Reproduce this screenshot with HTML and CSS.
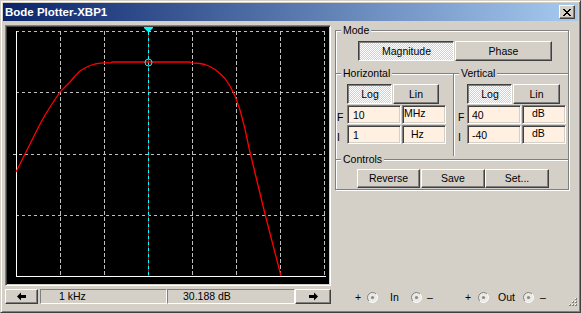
FILE: index.html
```html
<!DOCTYPE html>
<html>
<head>
<meta charset="utf-8">
<title>Bode Plotter-XBP1</title>
<link rel="stylesheet" href="styles.css">
</head>
<body>
<div class="window">
  <div class="titlebar">
    <span class="title">Bode Plotter-XBP1</span>
    <div class="close">
      <svg width="8" height="7" viewBox="0 0 8 7" shape-rendering="crispEdges">
        <path d="M0 0h2v1H0zM6 0h2v1H6zM1 1h2v1H1zM5 1h2v1H5zM2 2h4v1H2zM3 3h2v1H3zM2 4h4v1H2zM1 5h2v1H1zM5 5h2v1H5zM0 6h2v1H0zM6 6h2v1H6z" fill="#000"/>
      </svg>
    </div>
  </div>
  <div class="client">
    <div class="left">
      <div class="scope">
        <svg class="plot" width="322" height="257" viewBox="7 27 322 257">
          <rect x="7" y="27" width="322" height="257" fill="#000"/>
          <g stroke="#c0c0c0" stroke-width="1" shape-rendering="crispEdges" fill="none">
            <path d="M60.5 31V276M104.5 31V276M192.5 31V276M236.5 31V276M280.5 31V276M324.5 31V276" stroke-dasharray="4 2"/>
            <path d="M16 31.5H325M16 92.5H325M13 154.5H325M16 215.5H325" stroke-dasharray="3 3"/>
          </g>
          <g stroke="#fff" stroke-width="1" shape-rendering="crispEdges" fill="none">
            <path d="M16.5 31V277M16 276.5H326"/>
          </g>
          <line x1="148.5" y1="32" x2="148.5" y2="276" stroke="#b02828" stroke-width="1"/>
          <line x1="148.5" y1="32" x2="148.5" y2="276" stroke="#00ffff" stroke-width="1" stroke-dasharray="3 3"/>
          <polyline fill="none" stroke="#ff0000" stroke-width="1.3" stroke-linejoin="round"
            points="16,172 22,160 28,148 33,138 39,126 45,115 52,104 60,92 65,87 70,82 75,76 80,71 85,68 90,65.5 95,64 100,63.2 106,62.8 111,62.8 112,62 190,62 192,62.8 200,63.5 205,64.5 210,66.5 215,69.5 220,73.5 225,78.5 230,86 235,96 240,110 245,129 249,148 265,214 281,276"/>
          <circle cx="148.5" cy="62.5" r="3.5" fill="none" stroke="#00ffff" stroke-width="1"/>
          <polygon points="144,27 153,27 153,28 149,32 148,32 144,28" fill="#00ffff"/>
        </svg>
      </div>
      <div class="readout">
        <div class="btn arrow-l">
          <svg width="9" height="9" viewBox="0 0 9 9"><polygon points="0,4.5 4,0.5 4,3 9,3 9,6 4,6 4,8.5" fill="#000"/></svg>
        </div>
        <div class="field f1">1 kHz</div>
        <div class="field f2">30.188 dB</div>
        <div class="btn arrow-r">
          <svg width="9" height="9" viewBox="0 0 9 9"><polygon points="9,4.5 5,0.5 5,3 0,3 0,6 5,6 5,8.5" fill="#000"/></svg>
        </div>
      </div>
    </div>
    <div class="right">
      <div class="group">
        <div class="legend">Mode</div>
        <div class="mode-row">
          <div class="btn pressed w-mag">Magnitude</div>
          <div class="btn w-phase">Phase</div>
        </div>
        <div class="hv">
          <div class="col col-h">
            <div class="legend">Horizontal</div>
            <div class="toggle-row tr-h">
              <div class="btn pressed w-log">Log</div>
              <div class="btn w-lin">Lin</div>
            </div>
            <div class="param-row">
              <span class="plabel">F</span>
              <div class="edit val">10</div>
              <div class="edit unit">MHz</div>
            </div>
            <div class="param-row">
              <span class="plabel">I</span>
              <div class="edit val">1</div>
              <div class="edit unit pad-hz">Hz</div>
            </div>
          </div>
          <div class="col col-v">
            <div class="legend">Vertical</div>
            <div class="toggle-row tr-v">
              <div class="btn pressed w-log">Log</div>
              <div class="btn w-lin-v">Lin</div>
            </div>
            <div class="param-row">
              <span class="plabel">F</span>
              <div class="edit val">40</div>
              <div class="edit unit pad-db">dB</div>
            </div>
            <div class="param-row">
              <span class="plabel">I</span>
              <div class="edit val">-40</div>
              <div class="edit unit pad-db">dB</div>
            </div>
          </div>
        </div>
        <div class="controls">
          <div class="legend">Controls</div>
          <div class="ctrl-row">
            <div class="btn c-rev">Reverse</div>
            <div class="btn c-save">Save</div>
            <div class="btn c-set">Set...</div>
          </div>
        </div>
      </div>
      <div class="terminals">
        <span>+</span>
        <svg class="radio" width="11" height="11" viewBox="0 0 11 11"><circle cx="5.5" cy="5.5" r="5" fill="#ebe9e4"/><path d="M1.96 9.04A5 5 0 0 1 9.04 1.96" fill="none" stroke="#808080"/><path d="M9.04 1.96A5 5 0 0 1 1.96 9.04" fill="none" stroke="#fff"/><circle cx="5.5" cy="5.5" r="1.6" fill="#8a8a8a"/></svg>
        <span>In</span>
        <svg class="radio" width="11" height="11" viewBox="0 0 11 11"><circle cx="5.5" cy="5.5" r="5" fill="#ebe9e4"/><path d="M1.96 9.04A5 5 0 0 1 9.04 1.96" fill="none" stroke="#808080"/><path d="M9.04 1.96A5 5 0 0 1 1.96 9.04" fill="none" stroke="#fff"/><circle cx="5.5" cy="5.5" r="1.6" fill="#8a8a8a"/></svg>
        <span>–</span>
        <span>+</span>
        <svg class="radio" width="11" height="11" viewBox="0 0 11 11"><circle cx="5.5" cy="5.5" r="5" fill="#ebe9e4"/><path d="M1.96 9.04A5 5 0 0 1 9.04 1.96" fill="none" stroke="#808080"/><path d="M9.04 1.96A5 5 0 0 1 1.96 9.04" fill="none" stroke="#fff"/><circle cx="5.5" cy="5.5" r="1.6" fill="#8a8a8a"/></svg>
        <span>Out</span>
        <svg class="radio" width="11" height="11" viewBox="0 0 11 11"><circle cx="5.5" cy="5.5" r="5" fill="#ebe9e4"/><path d="M1.96 9.04A5 5 0 0 1 9.04 1.96" fill="none" stroke="#808080"/><path d="M9.04 1.96A5 5 0 0 1 1.96 9.04" fill="none" stroke="#fff"/><circle cx="5.5" cy="5.5" r="1.6" fill="#8a8a8a"/></svg>
        <span>–</span>
      </div>
    </div>
  </div>
  <svg class="grip" width="11" height="11" viewBox="0 0 11 11" shape-rendering="crispEdges">
    <g fill="#808080">
      <rect x="9" y="0" width="2" height="2"/>
      <rect x="6" y="3" width="2" height="2"/><rect x="9" y="3" width="2" height="2"/>
      <rect x="3" y="6" width="2" height="2"/><rect x="6" y="6" width="2" height="2"/><rect x="9" y="6" width="2" height="2"/>
    </g>
    <g fill="#fff">
      <rect x="9" y="0" width="1" height="1"/>
      <rect x="6" y="3" width="1" height="1"/><rect x="9" y="3" width="1" height="1"/>
      <rect x="3" y="6" width="1" height="1"/><rect x="6" y="6" width="1" height="1"/><rect x="9" y="6" width="1" height="1"/>
    </g>
  </svg>
</div>
</body>
</html>
```

FILE: styles.css
```css
html, body {
  margin: 0;
  padding: 0;
  background: #d4d0c8;
}

body {
  font-family: "Liberation Sans", Arial, sans-serif;
  font-size: 10.5px;
  color: #000;
}

.window {
  position: relative;
  width: 581px;
  height: 313px;
  box-sizing: border-box;
  border: 1px solid;
  border-color: #d4d0c8 #404040 #404040 #d4d0c8;
  box-shadow: inset 1px 1px #fff, inset -1px -1px #808080;
  padding: 2px;
  background: #d4d0c8;
  display: flex;
  flex-direction: column;
}

.titlebar {
  height: 18px;
  flex-shrink: 0;
  display: flex;
  align-items: center;
  background: linear-gradient(to right, #0a246a, #a6caf0);
  color: #fff;
  font-weight: bold;
  font-size: 11.5px;
  padding-left: 2px;
}

.title {
  flex: 1;
}

.close {
  width: 16px;
  height: 14px;
  box-sizing: border-box;
  margin-right: 3px;
  border: 1px solid;
  border-color: #fff #404040 #404040 #fff;
  box-shadow: inset -1px -1px #808080;
  background: #d4d0c8;
  display: flex;
  align-items: center;
  justify-content: center;
}

.close svg {
  display: block;
}

.client {
  flex: 1;
  display: flex;
  gap: 4px;
  padding: 4px 0 6px 2px;
}

.left {
  width: 326px;
  display: flex;
  flex-direction: column;
  gap: 3px;
}

.scope {
  width: 322px;
  height: 257px;
  padding: 1px;
  border: 1px solid;
  border-color: #808080 #fff #fff #808080;
  box-shadow: inset 1px 1px #404040, inset -1px -1px #d4d0c8;
}

.plot {
  display: block;
}

.readout {
  display: flex;
  height: 15px;
}

.btn {
  box-sizing: border-box;
  border: 1px solid;
  border-color: #fff #404040 #404040 #fff;
  box-shadow: inset -1px -1px #808080;
  background: #d4d0c8;
  display: flex;
  align-items: center;
  justify-content: center;
  line-height: 13px;
  white-space: nowrap;
}

.btn.pressed {
  border-color: #404040 #fff #fff #404040;
  box-shadow: inset 1px 1px #808080;
  background: repeating-conic-gradient(#fff 0 25%, #d4d0c8 0 50%) 0 0 / 2px 2px;
  padding: 1px 0 0 1px;
}

.btn svg {
  display: block;
}

.arrow-l {
  width: 33px;
  margin-right: 2px;
}

.arrow-r {
  width: 36px;
}

.field {
  box-sizing: border-box;
  border: 1px solid;
  border-color: #808080 #fff #fff #808080;
  display: flex;
  align-items: center;
  line-height: 13px;
}

.f1 {
  width: 127px;
  padding-left: 18px;
}

.f2 {
  width: 128px;
  padding-left: 15px;
}

.right {
  width: 235px;
  display: flex;
  flex-direction: column;
}

.group {
  margin-top: 5px;
  width: 234px;
  height: 160px;
  box-sizing: border-box;
  border: 1px solid #808080;
  box-shadow: inset 1px 1px #fff, 1px 1px #fff;
  display: flex;
  flex-direction: column;
}

.legend {
  width: max-content;
  margin: -7px 0 0 5px;
  padding: 0 2px;
  line-height: 13px;
  height: 13px;
  background: #d4d0c8;
}

.col-v .legend {
  margin-left: 4px;
}

.mode-row {
  display: flex;
  gap: 1px;
  margin: 4px 0 0 22px;
  height: 20px;
  flex-shrink: 0;
}

.w-mag {
  width: 96px;
}

.w-phase {
  width: 97px;
}

.hv {
  flex-shrink: 0;
  display: flex;
  margin-top: 12px;
  height: 83px;
  box-sizing: border-box;
  border-top: 1px solid #808080;
  box-shadow: inset 0 1px #fff;
}

.col {
  display: flex;
  flex-direction: column;
}

.col-h {
  width: 118px;
  box-sizing: border-box;
  border-right: 1px solid #808080;
  box-shadow: 1px 0 #fff;
}

.col-v {
  flex: 1;
  margin-left: 1px;
}

.toggle-row {
  display: flex;
  gap: 1px;
  height: 20px;
  margin-top: 4px;
}

.tr-h {
  margin-left: 11px;
}

.tr-v {
  margin-left: 12px;
}

.w-log {
  width: 45px;
}

.w-lin {
  width: 46px;
}

.w-lin-v {
  width: 47px;
}

.param-row {
  display: flex;
  height: 19px;
  margin-top: 1px;
}

.plabel {
  width: 11px;
  box-sizing: border-box;
  padding: 6px 0 0 1px;
  line-height: 13px;
}

.col-v .plabel {
  width: 12px;
  padding-left: 3px;
}

.edit {
  box-sizing: border-box;
  border: 1px solid;
  border-color: #808080 #fff #fff #808080;
  box-shadow: inset 1px 1px #404040, inset -1px -1px #d4d0c8;
  background: #fff0e1;
  line-height: 13px;
}

.edit.val {
  width: 54px;
  padding: 3px 0 0 5px;
  margin-right: 1px;
}

.col-v .edit.val {
  padding-left: 4px;
}

.edit.unit {
  width: 44px;
  padding: 1px 0 0 1px;
}

.edit.pad-hz {
  padding-left: 8px;
  padding-top: 2px;
}

.edit.pad-db {
  padding-left: 9px;
}

.controls {
  flex: 1;
  margin-top: 3px;
  border-top: 1px solid #808080;
  box-shadow: inset 0 1px #fff;
}

.ctrl-row {
  display: flex;
  height: 19px;
  margin: 3px 0 0 21px;
}

.c-rev {
  width: 63px;
}

.c-save {
  width: 64px;
  margin-left: 1px;
}

.c-set {
  width: 64px;
}

.terminals {
  margin-top: auto;
  height: 13px;
  display: grid;
  grid-template-columns: 12px 23px 21px 16px 38px 13px 20px 25px 17px auto;
  align-items: center;
  padding-left: 20px;
  line-height: 13px;
}

.radio {
  display: block;
}

.grip {
  position: absolute;
  right: 3px;
  bottom: 3px;
  display: block;
}
```
